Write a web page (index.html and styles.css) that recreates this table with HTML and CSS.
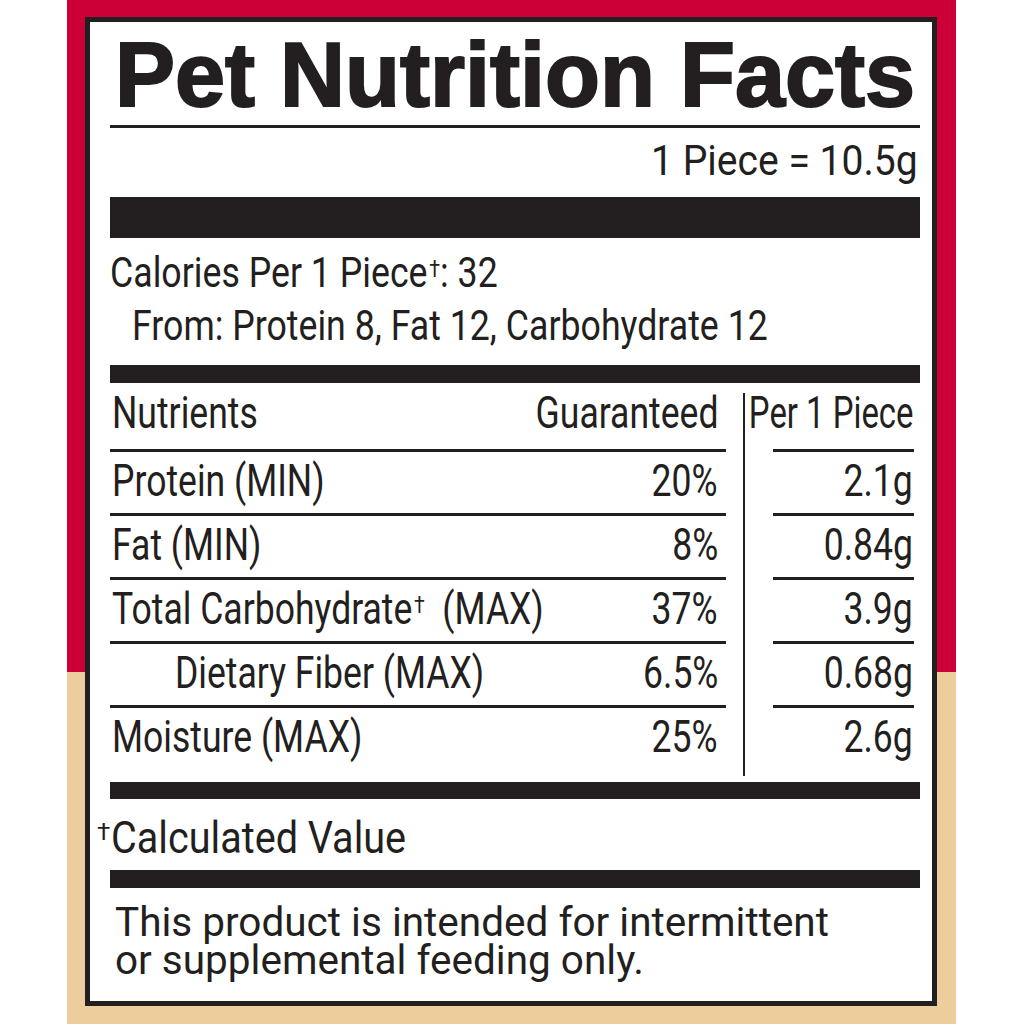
FILE: index.html
```html
<!DOCTYPE html>
<html lang="en">
<head>
<meta charset="utf-8">
<title>Pet Nutrition Facts</title>
<link rel="stylesheet" href="styles.css">
</head>
<body>
<div class="frame">
  <div class="label">
    <h1 class="title">Pet Nutrition Facts</h1>
    <div class="rule-thin"></div>
    <div class="serving"><span class="cond sx-serv origin-r">1 Piece = 10.5g</span></div>
    <div class="bar bar-41"></div>
    <div class="cal"><span class="cond sx-cal">Calories Per 1 Piece<span class="dag">†</span>: 32</span></div>
    <div class="cal from"><span class="cond sx-from">From: Protein 8, Fat 12, Carbohydrate 12</span></div>
    <div class="bar bar-18 bar-gap-a"></div>
    <div class="facts">
      <div class="col-left">
        <div class="row head"><span class="cond sx-tab name">Nutrients</span><span class="cond sx-tab origin-r">Guaranteed</span></div>
        <div class="row"><span class="cond sx-tab name">Protein (MIN)</span><span class="cond sx-tab origin-r">20%</span></div>
        <div class="row"><span class="cond sx-tab name">Fat (MIN)</span><span class="cond sx-tab origin-r">8%</span></div>
        <div class="row"><span class="cond sx-tab name">Total Carbohydrate<span class="dag">†</span>&nbsp; (MAX)</span><span class="cond sx-tab origin-r">37%</span></div>
        <div class="row sub"><span class="cond sx-tab name">Dietary Fiber (MAX)</span><span class="cond sx-tab origin-r">6.5%</span></div>
        <div class="row last"><span class="cond sx-tab name">Moisture (MAX)</span><span class="cond sx-tab origin-r">25%</span></div>
      </div>
      <div class="divider"></div>
      <div class="col-right">
        <div class="row head"><span class="cond sx-per origin-r">Per 1 Piece</span></div>
        <div class="row"><span class="cond sx-tab origin-r">2.1g</span></div>
        <div class="row"><span class="cond sx-tab origin-r">0.84g</span></div>
        <div class="row"><span class="cond sx-tab origin-r">3.9g</span></div>
        <div class="row"><span class="cond sx-tab origin-r">0.68g</span></div>
        <div class="row last"><span class="cond sx-tab origin-r">2.6g</span></div>
      </div>
    </div>
    <div class="bar bar-17 bar-gap-b"></div>
    <div class="calc"><span class="dag-out">†</span><span class="cond sx-calc">Calculated Value</span></div>
    <div class="bar bar-18 bar-gap-c"></div>
    <div class="note">
      <div class="note-line">This product is intended for intermittent</div>
      <div class="note-line">or supplemental feeding only.</div>
    </div>
  </div>
</div>
</body>
</html>
```
FILE: styles.css
```css
* { box-sizing: border-box; }

html, body {
  margin: 0;
  padding: 0;
  background: #ffffff;
}

body {
  width: 1024px;
  height: 1024px;
  overflow: hidden;
  color: #231f20;
  font-family: Roboto, "Liberation Sans", sans-serif;
}

.frame {
  margin-left: 67px;
  width: 889px;
  height: 1024px;
  padding-top: 17px;
  padding-left: 18px;
  background: linear-gradient(to bottom, #cc0036 0, #cc0036 672px, #eecd9d 672px, #eecd9d 100%);
}

.label {
  width: 852px;
  height: 989px;
  background: #ffffff;
  border: 5px solid #231f20;
  padding: 8px 12px 0 20px;
}

.title {
  margin: 0;
  font-family: "Liberation Sans", Arial, sans-serif;
  font-weight: 700;
  font-size: 90px;
  line-height: 90px;
  height: 90px;
  text-align: center;
  white-space: nowrap;
  -webkit-text-stroke: 2px #231f20;
}

.rule-thin {
  margin-top: 5px;
  height: 3px;
  background: #231f20;
}

.cond {
  display: inline-block;
  white-space: nowrap;
  transform-origin: left center;
}
.origin-r { transform-origin: right center; }

.sx-serv { transform: scaleX(0.93); }
.sx-cal { transform: scaleX(0.85); }
.sx-from { transform: scaleX(0.85); }
.sx-tab { transform: scaleX(0.79); }
.sx-per { transform: scaleX(0.73); }
.sx-calc { transform: scaleX(0.9); }

.dag {
  position: relative;
  top: -0.45em;
  font-size: 0.55em;
  margin-left: 2px;
}

.serving {
  margin-top: 12px;
  height: 42px;
  font-size: 42px;
  line-height: 42px;
  text-align: right;
  padding-right: 2px;
}

.bar { background: #231f20; }
.bar-41 { height: 41px; margin-top: 15px; }
.bar-18 { height: 18px; }
.bar-17 { height: 17px; }

.cal {
  margin-top: 14px;
  height: 42px;
  font-size: 42px;
  line-height: 42px;
}
.cal.from {
  margin-top: 11px;
  padding-left: 22px;
}

.bar-gap-a { margin-top: 18px; }
.bar-gap-b { margin-top: 6px; }
.bar-gap-c { margin-top: 10px; }

.facts {
  display: flex;
  align-items: flex-start;
}

.col-left {
  width: 616px;
  padding-top: 5px;
}

.col-right {
  width: 141px;
  margin-left: 28px;
  padding-top: 5px;
}

.divider {
  width: 2px;
  height: 383px;
  margin-top: 10px;
  margin-left: 17px;
  background: #231f20;
}

.row {
  display: flex;
  justify-content: space-between;
  height: 64px;
  border-bottom: 3px solid #231f20;
  font-size: 45px;
  line-height: 57px;
}
.col-left .row { padding: 0 8px 0 2px; }
.col-right .row { justify-content: flex-end; padding-right: 1px; }

.name {
  flex: 1 1 0;
  min-width: 0;
}

.row.head { line-height: 49px; }
.row.last { border-bottom: 0; }
.row.sub { padding-left: 65px; }

.calc {
  display: flex;
  align-items: baseline;
  margin-top: 17px;
  margin-left: -13px;
  height: 44px;
  font-size: 44px;
  line-height: 44px;
}
.dag-out {
  position: relative;
  top: -0.55em;
  font-size: 0.55em;
  margin-right: 1px;
}

.note {
  margin-top: 15px;
  padding-left: 5px;
  font-size: 40.5px;
  line-height: 38px;
  white-space: nowrap;
}
.note-line {
  height: 38px;
}
```
